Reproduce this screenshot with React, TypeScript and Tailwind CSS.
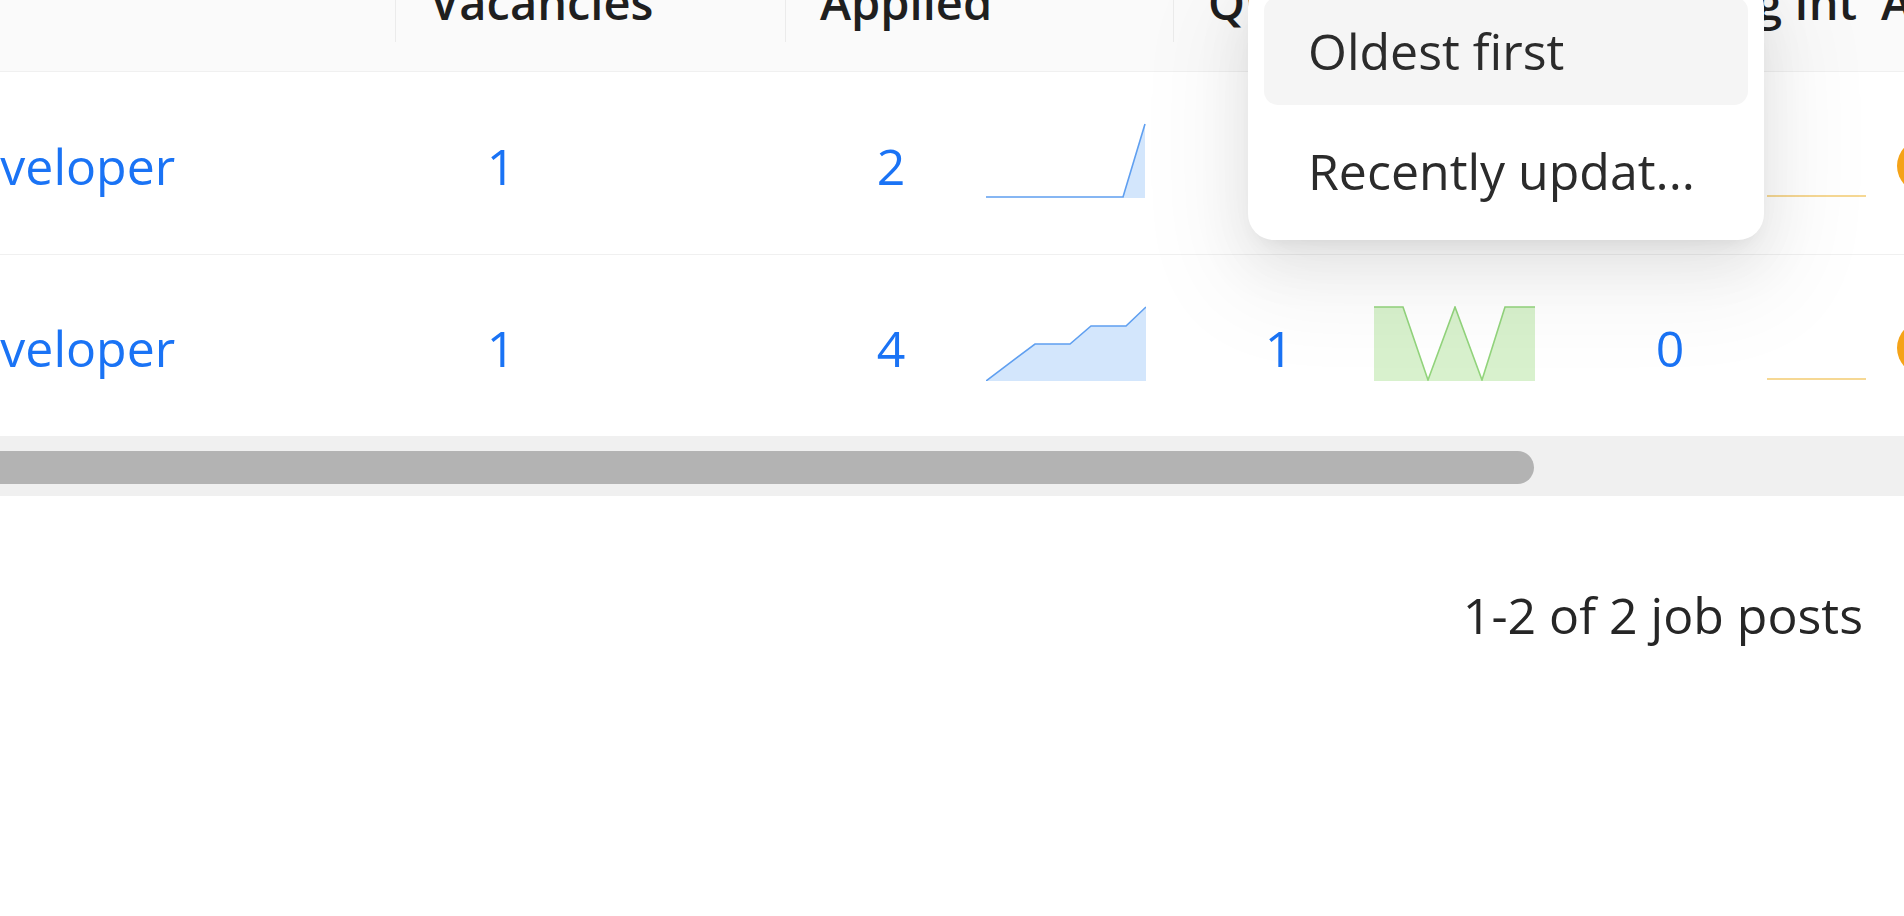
import React from "react";

function Sep() {
  return <div className="w-px h-[42px] shrink-0 bg-[#ebebeb]" />;
}

function HeaderCell({ className, children }: { className: string; children: React.ReactNode }) {
  return <div className={`shrink-0 pl-[34px] -mt-[37px] whitespace-nowrap ${className}`}>{children}</div>;
}

function BlueStep() {
  return (
    <svg width="160" height="75" viewBox="0 0 160 75" className="shrink-0 mb-[10px]">
      <polygon points="137,74 159,1 159,75 137,75" fill="#d3e6fc" />
      <polyline points="0,74 137,74 159,1" fill="none" stroke="#5f9ff0" strokeWidth="1.6" />
    </svg>
  );
}

function BlueRise() {
  return (
    <svg width="160" height="75" viewBox="0 0 160 75" className="shrink-0 mb-[10px]">
      <polygon points="0,75 49,38 84,38 105,20 140,20 160,1 160,75" fill="#d3e6fc" />
      <polyline points="0,75 49,38 84,38 105,20 140,20 160,1" fill="none" stroke="#5f9ff0" strokeWidth="1.6" />
    </svg>
  );
}

function GreenW() {
  return (
    <svg width="161" height="75" viewBox="0 0 161 75" className="shrink-0 mb-[10px]">
      <polygon points="0,1 29,1 54,74 81,1 108,74 131,1 161,1 161,75 0,75" fill="#d8f1cd" />
      <polyline points="0,1 29,1 54,74 81,1 108,74 131,1 161,1" fill="none" stroke="#92d47c" strokeWidth="1.6" />
    </svg>
  );
}

function YellowFlat() {
  return (
    <svg width="99" height="75" viewBox="0 0 99 75" className="shrink-0 mb-[10px] ml-[3px]">
      <line x1="0" y1="73" x2="99" y2="73" stroke="#f6d894" strokeWidth="2" />
    </svg>
  );
}

function NumCell({ className, n, children }: { className: string; n: string; children?: React.ReactNode }) {
  return (
    <div className={`shrink-0 flex items-center ${className}`}>
      <span className="w-[200px] shrink-0 pl-[10px] text-center text-[#1a73f5]">{n}</span>
      {children}
    </div>
  );
}

function Row({ className, title, vac, applied, appliedSpark, qual, qualSpark, pend }: {
  className: string;
  title: string;
  vac: string;
  applied: string;
  appliedSpark: React.ReactNode;
  qual: string;
  qualSpark: React.ReactNode;
  pend: string;
}) {
  return (
    <div className={`flex items-center pt-[5px] text-[50px] leading-[78px] ${className}`}>
      <div className="w-[396px] shrink-0 overflow-visible whitespace-nowrap">
        <span className="-ml-[64px] text-[#1a73f5] inline-block">{title}</span>
      </div>
      <NumCell className="w-[390px]" n={vac} />
      <NumCell className="w-[388px]" n={applied}>{appliedSpark}</NumCell>
      <NumCell className="w-[390px]" n={qual}>{qualSpark}</NumCell>
      <div className="shrink-0 flex items-center">
        <span className="w-[200px] shrink-0 pl-[12px] text-center text-[#1a73f5]">{pend}</span>
        <YellowFlat />
        <div className="ml-[31px] w-[54px] h-[54px] shrink-0 rounded-full bg-[#f5a318]" />
      </div>
    </div>
  );
}

export default function App() {
  return (
    <div className="relative w-[1904px] h-[916px] overflow-hidden bg-white font-['Open_Sans','Noto_Sans',sans-serif] text-[#1f1f1f]">
      <div className="flex h-[72px] overflow-hidden border-b border-[#f0f0f0] bg-[#fafafa] text-[47px] font-semibold leading-[78px]">
        <div className="w-[395px] shrink-0" />
        <Sep />
        <HeaderCell className="w-[389px]">Vacancies</HeaderCell>
        <Sep />
        <HeaderCell className="w-[387px]">Applied</HeaderCell>
        <Sep />
        <HeaderCell className="w-[389px]">Qualified</HeaderCell>
        <Sep />
        <HeaderCell className="w-[400px]">
          Pending Int<span className="ml-[24px]">Accepted</span>
        </HeaderCell>
      </div>

      <Row
        className="h-[183px] border-b border-[#f0f0f0]"
        title="Developer"
        vac="1"
        applied="2"
        appliedSpark={<BlueStep />}
        qual=""
        qualSpark={null}
        pend=""
      />
      <Row
        className="h-[181px]"
        title="Developer"
        vac="1"
        applied="4"
        appliedSpark={<BlueRise />}
        qual="1"
        qualSpark={<GreenW />}
        pend="0"
      />

      <div className="h-[60px] bg-[#f0f0f0] pt-[15px]">
        <div className="h-[33px] w-[1534px] rounded-r-full bg-[#b3b3b3]" />
      </div>

      <div className="mt-[80px] flex justify-end pr-[41px] text-[50px] leading-[78px] text-[#262626]">
        1-2 of 2 job posts
      </div>

      <div className="absolute left-[1248px] top-[-19px] w-[516px] rounded-[26px] bg-white px-[16px] pt-[16px] pb-[15px] shadow-[0_21px_56px_0_rgba(0,0,0,0.08),0_10px_21px_-14px_rgba(0,0,0,0.12),0_31px_98px_28px_rgba(0,0,0,0.05)]">
        <div className="flex flex-col gap-[12px] text-[50px] leading-[78px] text-[#2b2b2b]">
          <div className="h-[108px] rounded-[14px] bg-[#f5f5f5] pl-[44px] flex items-center whitespace-nowrap">Oldest first</div>
          <div className="h-[108px] rounded-[14px] pl-[44px] flex items-center whitespace-nowrap">Recently updat...</div>
        </div>
      </div>
    </div>
  );
}
